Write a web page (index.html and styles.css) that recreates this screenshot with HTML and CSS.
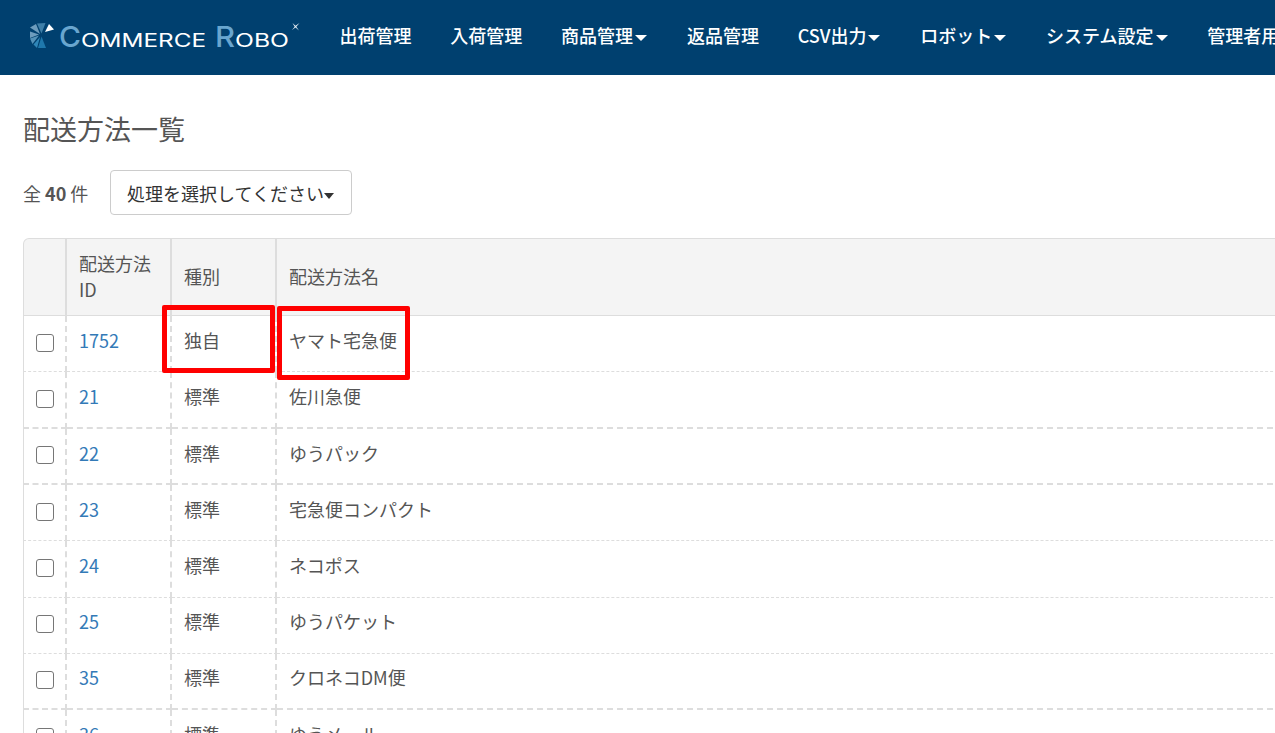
FILE: index.html
```html
<!DOCTYPE html>
<html lang="ja">
<head>
<meta charset="utf-8">
<title>配送方法一覧</title>
<link rel="stylesheet" href="styles.css">
</head>
<body>
<header class="nav">
  <a class="logo">
    <svg class="logo-art" width="311" height="45" viewBox="29 15 311 45">
      <polygon points="37,23.500 45.500,23 41.500,33.500" fill="#3f7fa8"/>
      <polygon points="30,27.500 36,24 40,34" fill="#6d9cbd"/>
      <polygon points="30,31.500 39,34.500 30,38" fill="#6d9cbd"/>
      <polygon points="30,38.500 39,35.500 32.500,44" fill="#5592b8"/>
      <polygon points="33.500,44.500 40,37 37,48" fill="#2f86b8"/>
      <polygon points="41.500,36.500 46,48 38,48" fill="#1f78ac"/>
      <polygon points="45,32 49,24 54,29.500" fill="#fff"/>
      <text class="logo-cap" x="59" y="47" textLength="22" lengthAdjust="spacingAndGlyphs">C</text>
      <text class="logo-small" x="81" y="47" textLength="125" lengthAdjust="spacingAndGlyphs">OMMERCE</text>
      <text class="logo-cap" x="215" y="47" textLength="20" lengthAdjust="spacingAndGlyphs">R</text>
      <text class="logo-small" x="235" y="47" textLength="54" lengthAdjust="spacingAndGlyphs">OBO</text>
      <path d="M295.500 25.800L299.500 23 296.300 26.700 299 30.500 295.500 27.600 292 30 294.700 26.700 292.500 23z" fill="#e6eef4"/>
    </svg>
  </a>
  <nav class="menu">
    <a>出荷管理</a>
    <a>入荷管理</a>
    <a class="drop">商品管理</a>
    <a>返品管理</a>
    <a class="drop">CSV出力</a>
    <a class="drop">ロボット</a>
    <a class="drop">システム設定</a>
    <a>管理者用</a>
  </nav>
</header>
<main class="content">
  <h1 class="title">配送方法一覧</h1>
  <div class="toolbar">
    <span class="count">全 <b>40</b> 件</span>
    <button class="select drop-dark">処理を選択してください</button>
  </div>
  <div class="table-wrap">
    <table class="list">
      <colgroup><col class="c1"><col class="c2"><col class="c3"><col class="c4"></colgroup>
      <thead>
        <tr><th></th><th>配送方法<br>ID</th><th>種別</th><th>配送方法名</th></tr>
      </thead>
      <tbody>
        <tr class="thin h56"><td><span class="check"></span></td><td><a>1752</a></td><td>独自</td><td>ヤマト宅急便</td></tr>
        <tr class="thick h57"><td><span class="check"></span></td><td><a>21</a></td><td>標準</td><td>佐川急便</td></tr>
        <tr class="thick h56"><td><span class="check"></span></td><td><a>22</a></td><td>標準</td><td>ゆうパック</td></tr>
        <tr class="thin h56"><td><span class="check"></span></td><td><a>23</a></td><td>標準</td><td>宅急便コンパクト</td></tr>
        <tr class="thin h57 raised"><td><span class="check"></span></td><td><a>24</a></td><td>標準</td><td>ネコポス</td></tr>
        <tr class="thin h56 raised"><td><span class="check"></span></td><td><a>25</a></td><td>標準</td><td>ゆうパケット</td></tr>
        <tr class="thick h56 raised"><td><span class="check"></span></td><td><a>35</a></td><td>標準</td><td>クロネコDM便</td></tr>
        <tr class="thin h56"><td><span class="check"></span></td><td><a>36</a></td><td>標準</td><td>ゆうメール</td></tr>
      </tbody>
    </table>
    <div class="mark mark-a"></div>
    <div class="mark mark-b"></div>
  </div>
</main>
</body>
</html>
```
FILE: styles.css
```css
html, body { margin: 0; height: 733px; overflow: hidden; }
body {
  background: #fff;
  color: #555;
  font-family: "Noto Sans CJK JP", "Noto Sans", sans-serif;
  font-size: 18px;
}
.nav {
  height: 75px;
  background: #00406f;
  display: flex;
  align-items: center;
  white-space: nowrap;
  overflow: hidden;
}
.logo {
  display: block;
  margin-left: 29px;
  width: 310.500px;
  height: 45px;
  flex: none;
}
.logo-art { display: block; }
.logo-cap { font-family: Inter, sans-serif; font-size: 29px; font-weight: 500; fill: #69a6cf; }
.logo-small { font-family: Inter, sans-serif; font-size: 18px; font-weight: 400; fill: #fff; }
.menu { display: flex; gap: 38.800px; margin-bottom: 6px; color: #fff; font-weight: 500; flex: none; }
.drop::after {
  content: "";
  display: inline-block;
  vertical-align: middle;
  margin: 0 1px 0 2px;
  border-top: 6px solid currentColor;
  border-left: 6px solid transparent;
  border-right: 6px solid transparent;
}
.drop-dark::after {
  content: "";
  display: inline-block;
  vertical-align: middle;
  border-top: 6px solid currentColor;
  border-left: 5.500px solid transparent;
  border-right: 5.500px solid transparent;
}
.content { padding: 0 0 0 23px; }
.title {
  margin: 0;
  padding-top: 34px;
  font-size: 27px;
  font-weight: 400;
  line-height: 40px;
  color: #555;
}
.toolbar { display: flex; align-items: center; margin-top: 21px; height: 45px; }
.count { width: 87px; }
.count b { font-weight: 700; }
.select {
  width: 242px;
  height: 45px;
  padding: 0 0 0 16px;
  background: #fff;
  border: 1px solid #ccc;
  border-radius: 4px;
  color: #333;
  font: inherit;
  text-align: left;
  white-space: nowrap;
}
.table-wrap {
  position: relative;
  margin-top: 23px;
  width: 1300px;
}
.list {
  width: 1300px;
  table-layout: fixed;
  border-collapse: separate;
  border-spacing: 0;
  line-height: 26px;
}
.c1 { width: 44px; }
.c2, .c3 { width: 105px; }
.list th {
  height: 78px;
  box-sizing: border-box;
  padding: 0 12px 2px;
  background: #f4f4f4;
  font-weight: 400;
  text-align: left;
  border-top: 1px solid #ddd;
  border-bottom: 1px solid #ddd;
  border-right: 2px solid #ddd;
}
.list th:first-child { border-left: 1px solid #ddd; border-top-left-radius: 6px; }
.list td {
  box-sizing: border-box;
  padding: 0 12px 7px;
  border-right: 2px dashed #ddd;
}
.list td:first-child { border-left: 1px solid #ddd; padding: 0 0 2px 12px; }
.list .raised td { padding-bottom: 9px; }
.list .raised td:first-child { padding-bottom: 3px; }
.list td:last-child, .list th:last-child { border-right: 0; }
.h56 td { height: 56px; }
.h57 td { height: 57px; }
.thin td { border-bottom: 1px dashed #ddd; }
.thick td { border-bottom: 2px dashed #ddd; }
.list a { color: #337ab7; }
.check {
  display: block;
  box-sizing: border-box;
  width: 18px;
  height: 18px;
  border: 1.500px solid #767676;
  border-radius: 3px;
  background: #fff;
}
.mark {
  position: absolute;
  box-sizing: border-box;
  border: 5px solid #f00;
  border-radius: 2px;
}
.mark-a { left: 139px; top: 67px; width: 113px; height: 68px; }
.mark-b { left: 254px; top: 68px; width: 133px; height: 74px; }
```
